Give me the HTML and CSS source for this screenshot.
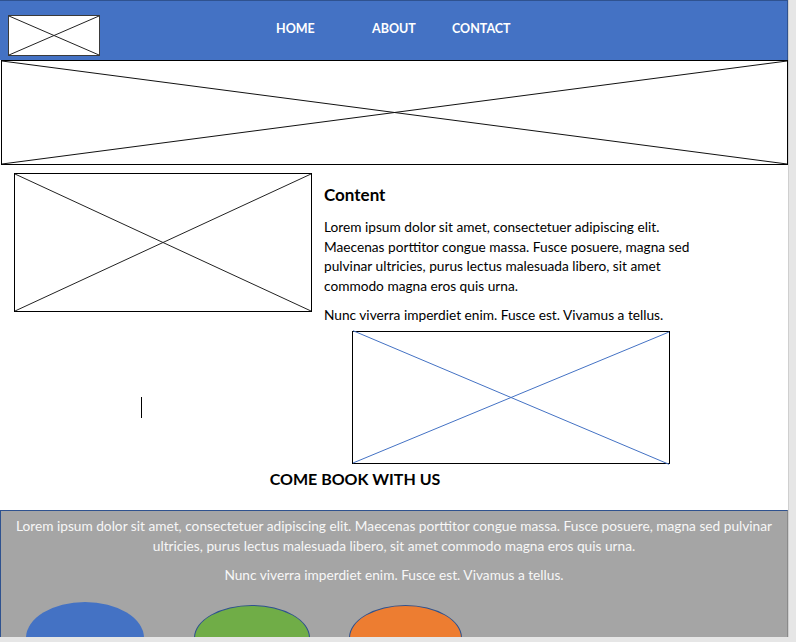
FILE: index.html
```html
<!DOCTYPE html>
<html>
<head>
<meta charset="utf-8">
<link rel="stylesheet" href="styles.css">
</head>
<body>
<div class="page">
  <header class="topbar">
    <div class="ph logo">
      <svg viewBox="0 0 100 100" preserveAspectRatio="none"><line x1="0" y1="0" x2="100" y2="100"/><line x1="100" y1="0" x2="0" y2="100"/></svg>
    </div>
    <nav class="nav">
      <a class="nav-home">HOME</a>
      <a class="nav-about">ABOUT</a>
      <a class="nav-contact">CONTACT</a>
    </nav>
  </header>
  <div class="ph hero">
    <svg viewBox="0 0 100 100" preserveAspectRatio="none"><line x1="0" y1="0" x2="100" y2="100"/><line x1="100" y1="0" x2="0" y2="100"/></svg>
  </div>
  <section class="content">
    <div class="row">
      <div class="ph img1">
        <svg viewBox="0 0 100 100" preserveAspectRatio="none"><line x1="0" y1="0" x2="100" y2="100"/><line x1="100" y1="0" x2="0" y2="100"/></svg>
      </div>
      <div class="text">
        <h2 class="title">Content</h2>
        <p>Lorem ipsum dolor sit amet, consectetuer adipiscing elit. Maecenas porttitor congue massa. Fusce posuere, magna sed pulvinar ultricies, purus lectus malesuada libero, sit amet commodo magna eros quis urna.</p>
        <p>Nunc viverra imperdiet enim. Fusce est. Vivamus a tellus.</p>
      </div>
    </div>
    <div class="row2">
      <span class="caret"></span>
      <div class="ph img2 blue">
        <svg viewBox="0 0 100 100" preserveAspectRatio="none"><line x1="0" y1="-1" x2="100" y2="101"/><line x1="100" y1="0" x2="0" y2="100"/></svg>
      </div>
    </div>
    <h3 class="book">COME BOOK WITH US</h3>
  </section>
  <footer class="footer">
    <p>Lorem ipsum dolor sit amet, consectetuer adipiscing elit. Maecenas porttitor congue massa. Fusce posuere, magna sed pulvinar ultricies, purus lectus malesuada libero, sit amet commodo magna eros quis urna.</p>
    <p>Nunc viverra imperdiet enim. Fusce est. Vivamus a tellus.</p>
    <div class="dots">
      <span class="dot dot-blue"></span>
      <span class="dot dot-green"></span>
      <span class="dot dot-orange"></span>
    </div>
  </footer>
</div>
</body>
</html>
```
FILE: styles.css
```css
* { box-sizing: border-box; }
html, body { margin: 0; padding: 0; }
body {
  background: #e6e6e6;
  font-family: Lato, "Open Sans", sans-serif;
  color: #000;
  width: 796px;
  height: 642px;
  overflow: hidden;
}
.page {
  width: 789px;
  height: 637px;
  background: #fff;
  overflow: hidden;
  border-right: 1px solid #cfcfcf;
  display: flex;
  flex-direction: column;
}
.ph { background: #fff; border: 1px solid #000; }
.ph svg { display: block; width: 100%; height: 100%; overflow: visible; }
.ph line { stroke: #222; stroke-width: 1; vector-effect: non-scaling-stroke; }
.ph.blue line { stroke: #4472c4; }

.topbar {
  height: 60px;
  flex: none;
  background: #4472c4;
  border-top: 1px solid #2f528f;
  border-right: 1px solid #2f528f;
  display: flex;
  align-items: flex-start;
}
.logo {
  width: 92px;
  height: 41px;
  margin: 14px 0 0 8px;
  border-color: #3a3a3a;
}
.nav {
  display: flex;
  margin-left: 176px;
  padding-top: 19px;
}
.nav a {
  color: #fff;
  font-weight: 700;
  font-size: 12.5px;
  line-height: 17px;
}
.nav-home { width: 96px; }
.nav-about { width: 80px; }

.hero {
  height: 105px;
  flex: none;
  margin-left: 1px;
}
.hero line { stroke: #111; }

.content { flex: none; }
.row {
  display: flex;
  align-items: flex-start;
  padding: 8px 0 0 14px;
}
.img1 { width: 298px; height: 139px; flex: none; }
.text {
  margin-left: 12px;
  padding-top: 11px;
  width: 375px;
  font-size: 13.7px;
  line-height: 19.5px;
}
.title {
  margin: 0 0 11px;
  font-size: 17px;
  line-height: 22px;
  font-weight: 700;
}
.text p { margin: 0 0 10px; }
.text p:last-child { margin: 0; }

.row2 {
  display: flex;
  align-items: center;
  margin-top: 6px;
}
.caret {
  width: 1px;
  height: 21px;
  background: #000;
  margin: 20px 0 0 141px;
}
.img2 { width: 318px; height: 133px; margin-left: 210px; }

.book {
  margin: 5px 0 21px;
  width: 710px;
  text-align: center;
  font-size: 16px;
  line-height: 20px;
  font-weight: 700;
}

.footer {
  flex: 1;
  background: #a5a5a5;
  border-top: 1px solid #2f528f;
  border-left: 1px solid #2f528f;
  border-right: 1px solid #8a8a8a;
  color: #f7f7f7;
  text-align: center;
  font-size: 13.7px;
  line-height: 20px;
  padding: 5px 6px 0;
}
.footer p { margin: 0 0 9px; }
.dots {
  display: flex;
  align-items: flex-start;
  margin-top: 17px;
  padding-left: 19px;
}
.dot { display: block; border-radius: 50%; flex: none; }
.dot-blue { width: 118px; height: 72px; background: #4472c4; }
.dot-green { width: 116px; height: 66px; background: #70ad47; border: 1px solid #2f528f; margin: 3px 0 0 50px; }
.dot-orange { width: 113px; height: 66px; background: #ed7d31; border: 1px solid #2f528f; margin: 3px 0 0 39px; }
```
